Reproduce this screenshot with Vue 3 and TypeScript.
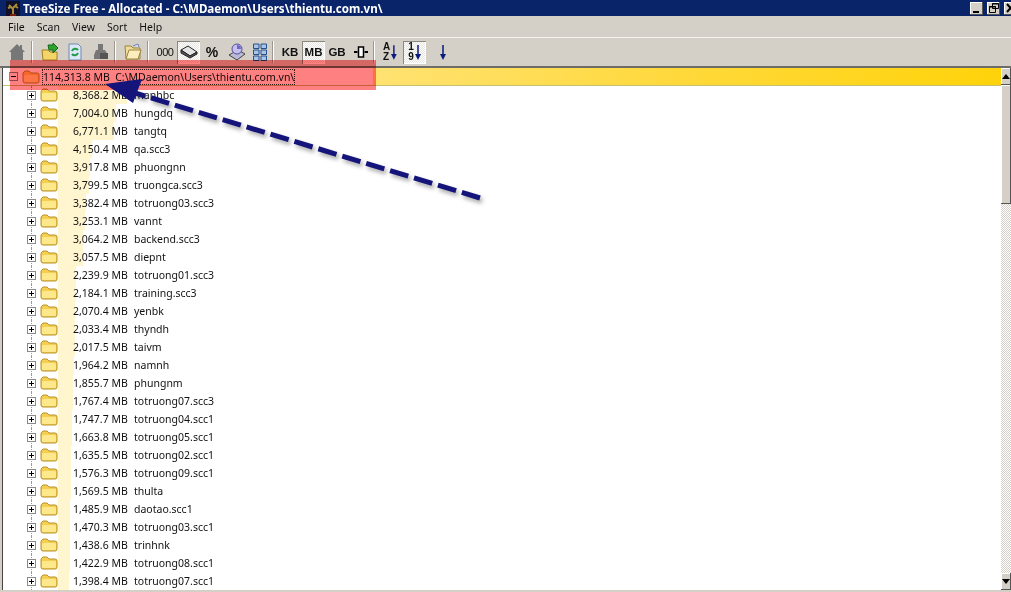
<script setup lang="ts">
interface Row { size: string; name: string; mb: number }
const raw: [string, string][] = [
  ['8,368.2', 'manhbc'], ['7,004.0', 'hungdq'], ['6,771.1', 'tangtq'], ['4,150.4', 'qa.scc3'],
  ['3,917.8', 'phuongnn'], ['3,799.5', 'truongca.scc3'], ['3,382.4', 'totruong03.scc3'], ['3,253.1', 'vannt'],
  ['3,064.2', 'backend.scc3'], ['3,057.5', 'diepnt'], ['2,239.9', 'totruong01.scc3'], ['2,184.1', 'training.scc3'],
  ['2,070.4', 'yenbk'], ['2,033.4', 'thyndh'], ['2,017.5', 'taivm'], ['1,964.2', 'namnh'],
  ['1,855.7', 'phungnm'], ['1,767.4', 'totruong07.scc3'], ['1,747.7', 'totruong04.scc1'], ['1,663.8', 'totruong05.scc1'],
  ['1,635.5', 'totruong02.scc1'], ['1,576.3', 'totruong09.scc1'], ['1,569.5', 'thulta'], ['1,485.9', 'daotao.scc1'],
  ['1,470.3', 'totruong03.scc1'], ['1,438.6', 'trinhnk'], ['1,422.9', 'totruong08.scc1'], ['1,398.4', 'totruong07.scc1'],
]
const rows: Row[] = raw.map(([size, name]) => ({ size, name, mb: parseFloat(size.replace(',', '')) }))
const barWidth = (mb: number) => `${Math.round((mb / 114313.8) * 940)}px`
const menu = ['File', 'Scan', 'View', 'Sort', 'Help']
</script>

<template>
  <div class="win">
    <header class="title">
      <svg class="logo" width="14" height="15" viewBox="0 0 14 15">
        <rect width="14" height="15" fill="#10102a" />
        <path d="M7 14V7M7 8 3 4M7 7l4-4M5 6 2 7M9 5l3 2" stroke="#a88a3a" stroke-width="2" fill="none" />
        <path d="M4 14h6" stroke="#7a1c10" stroke-width="2" />
      </svg>
      <span class="title-text">TreeSize Free - Allocated - C:\MDaemon\Users\thientu.com.vn\</span>
      <div class="win-btns">
        <span class="wbtn"><svg width="12" height="10" viewBox="0 0 12 10"><path d="M2 9h6" stroke="#000" stroke-width="2" /></svg></span>
        <span class="wbtn"><svg width="12" height="10" viewBox="0 0 12 10"><path d="M4.500.5h6v5h-6zM1.500 3.500h6v6h-6z" fill="#d4d0c8" stroke="#000" /><path d="M4 1h7M1 4h7" stroke="#000" /></svg></span>
        <span class="wbtn"><svg width="12" height="10" viewBox="0 0 12 10"><path d="M2 1l7 8M9 1 2 9" stroke="#000" stroke-width="2" /></svg></span>
      </div>
    </header>

    <nav class="menu"><span v-for="m in menu" :key="m">{{ m }}</span></nav>

    <div class="toolbar">
      <span class="slot s18"><svg width="18" height="18" viewBox="0 0 18 18"><path d="M9 1 1 9h2v8h12V9h2z" fill="#777" /><rect x="12" y="2" width="2" height="5" fill="#777" /></svg></span>
      <i class="sep"></i>
      <span class="slot s18"><svg width="18" height="20" viewBox="0 0 18 20"><path d="M1 8h6l2 2h7v8H2z" fill="#f4d56a" stroke="#a08020" /><path d="M7 3h5V1l5 5-5 5V8H8z" fill="#2fa12f" stroke="#166b16" /></svg></span>
      <span class="slot s14 gap9"><svg width="14" height="18" viewBox="0 0 14 18"><path d="M1 1h9l3 3v13H1z" fill="#dbe8f6" stroke="#7088b0" /><path d="M10 7a3.500 3.500 0 0 0-6 1M4 11a3.500 3.500 0 0 0 6-1" stroke="#1f9a4a" stroke-width="2" fill="none" /></svg></span>
      <span class="slot s16 gap11"><svg width="16" height="18" viewBox="0 0 16 18"><path d="M5 1h5v6H5zM3 7h9l3 5v4H1v-4z" fill="#777" /><rect x="7" y="10" width="8" height="6" fill="#555" /></svg></span>
      <i class="sep"></i>
      <span class="slot s18"><svg width="18" height="18" viewBox="0 0 18 18"><path d="M1 3h6l2 2h7v11H2z" fill="#f0dc9a" stroke="#9a8240" /><path d="M5 7h12l-3 9H2z" fill="#fbeebc" stroke="#9a8240" /><path d="M9 3l5-2 1 3" fill="#cfe0f5" stroke="#7088b0" /></svg></span>
      <i class="sep"></i>
      <span class="slot s16 txt zeros">000</span>
      <span class="slot pressed gap4"><svg width="20" height="14" viewBox="0 0 20 14"><path d="M2 5 9 1l9 6-7 4z" fill="#e4e4e4" stroke="#222" /><path d="M2 5v3l9 5 7-4V7l-7 4z" fill="#555" stroke="#222" /></svg></span>
      <span class="slot s14 gap5 txt pct">%</span>
      <span class="slot s18 gap9"><svg width="18" height="18" viewBox="0 0 18 18"><path d="M1 12 10 7l7 4-8 6z" fill="#b9b9d8" stroke="#444" /><circle cx="9" cy="6" r="5" fill="#c5c0ee" stroke="#55509a" /><path d="M9 6V2a4 4 0 0 1 4 4z" fill="#7068c8" /></svg></span>
      <span class="slot s14 gap7"><svg width="14" height="18" viewBox="0 0 14 18"><path d="M.5 1h5.500v4.500H.5zM8 1h5.500v4.500H8zM.5 7h5.500v4.500H.5zM8 7h5.500v4.500H8zM.5 13h5.500v4.500H.5zM8 13h5.500v4.500H8z" fill="#a9c4e8" stroke="#24508c" /></svg></span>
      <i class="sep"></i>
      <span class="slot s16 txt unit">KB</span>
      <span class="slot pressed gap4 txt unit">MB</span>
      <span class="slot s16 gap4 txt unit">GB</span>
      <span class="slot s14 gap9"><svg width="14" height="12" viewBox="0 0 14 12"><path d="M0 6h3.500M10.500 6H14" stroke="#000" stroke-width="2" /><path d="M4.500 1h5v10h-5z" fill="#fff" stroke="#000" stroke-width="1.500" /></svg></span>
      <i class="sep"></i>
      <span class="slot sort s14"><span class="az"><b>A</b><b>Z</b></span><svg width="6" height="15" viewBox="0 0 6 15"><path d="M3 0v11" stroke="#0a1a80" stroke-width="1.500" /><path d="M0 9h6l-3 6z" fill="#0a1a80" /></svg></span>
      <span class="slot sort pressed gap6"><span class="az"><b>1</b><b>9</b></span><svg width="6" height="15" viewBox="0 0 6 15"><path d="M3 0v11" stroke="#0a1a80" stroke-width="1.500" /><path d="M0 9h6l-3 6z" fill="#0a1a80" /></svg></span>
      <span class="slot down"><svg width="6" height="15" viewBox="0 0 6 15"><path d="M3 0v11" stroke="#0a1a80" stroke-width="1.500" /><path d="M0 9h6l-3 6z" fill="#0a1a80" /></svg></span>
    </div>

    <main class="body">
      <div class="tree">
        <div class="root">
          <span class="box"><i></i></span>
          <svg class="folder" width="18" height="14" viewBox="0 0 18 14"><path d="M1 3 3 1h4l2 2h6q2 0 2 2v6q0 2-2 2H3q-2 0-2-2z" fill="#f4cf52" stroke="#b8922a" /><path d="M2 6q0-1 2-1h10q2 0 2 1v5q0 1-1 1H3q-1 0-1-1z" fill="#fde88c" /></svg>
          <span class="root-label">114,313.8 MB&nbsp; C:\MDaemon\Users\thientu.com.vn\</span>
        </div>
        <div v-for="r in rows" :key="r.name + r.size" class="row">
          <span class="guide"></span>
          <span class="box"><i></i><u></u></span>
          <svg class="folder" width="18" height="14" viewBox="0 0 18 14"><path d="M1 3 3 1h4l2 2h6q2 0 2 2v6q0 2-2 2H3q-2 0-2-2z" fill="#f4cf52" stroke="#b8922a" /><path d="M2 6q0-1 2-1h10q2 0 2 1v5q0 1-1 1H3q-1 0-1-1z" fill="#fde88c" /></svg>
          <span class="cell">
            <span class="bar" :style="{ width: barWidth(r.mb) }"></span>
            <span class="size">{{ r.size }} MB</span>
            <span class="name">{{ r.name }}</span>
          </span>
        </div>
      </div>
      <aside class="scroll">
        <span class="sbtn"><svg width="8" height="5" viewBox="0 0 8 5"><path d="M4 0 8 5H0z" /></svg></span>
        <span class="thumb"></span>
        <span class="track"></span>
        <span class="sbtn"><svg width="8" height="5" viewBox="0 0 8 5"><path d="M0 0h8L4 5z" /></svg></span>
      </aside>
    </main>
    <div class="status"></div>

    <div class="highlight"></div>
    <svg class="arrow" width="1011" height="592" viewBox="0 0 1011 592">
      <defs><filter id="sh" x="-10%" y="-30%" width="120%" height="160%"><feGaussianBlur stdDeviation="2" /></filter></defs>
      <path d="M482 201 134 95" stroke="#000" stroke-opacity=".35" stroke-width="5" stroke-dasharray="19 6" fill="none" filter="url(#sh)" />
      <path d="M480 198 132 92" stroke="#14147a" stroke-width="5" stroke-dasharray="19 6" fill="none" />
      <path d="M105 84 142 79 133 103z" fill="#14147a" />
    </svg>
  </div>
</template>

<style>
html, body { margin: 0; background: #fff; overflow: hidden; }
</style>

<style scoped>
.win {
  position: relative;
  width: 1011px;
  height: 592px;
  overflow: hidden;
  background: #d4d0c8;
  font-family: "Noto Sans", sans-serif;
  display: flex;
  flex-direction: column;
  color: #111;
}
.title {
  height: 16px;
  background: #0a246a;
  color: #fff;
  display: flex;
  align-items: center;
  flex: none;
}
.logo { margin-left: 6px; flex: none; }
.title-text { margin-left: 3px; font-size: 11.600px; font-weight: 700; white-space: nowrap; }
.win-btns { margin-left: auto; display: flex; gap: 4px; margin-right: -6px; }
.wbtn {
  width: 13px;
  height: 13px;
  background: #d4d0c8;
  display: flex;
  align-items: center;
  justify-content: center;
  box-shadow: inset -1px -1px #555, inset 1px 1px #fff;
}
.menu {
  height: 21px;
  display: flex;
  align-items: center;
  gap: 12px;
  padding-left: 8px;
  font-size: 10.500px;
  border-bottom: 1px solid #f5f5f0;
  flex: none;
}
.toolbar {
  height: 30px;
  display: flex;
  align-items: center;
  flex: none;
  padding-left: 8px;
  border-bottom: 2px solid #6e6c66;
  box-sizing: border-box;
}
.slot { flex: none; display: inline-flex; align-items: center; justify-content: center; }
.s18 { width: 18px; }
.s16 { width: 16px; }
.s14 { width: 14px; }
.gap4 { margin-left: 4px; }
.gap5 { margin-left: 5px; }
.gap6 { margin-left: 6px; }
.gap7 { margin-left: 7px; }
.gap9 { margin-left: 9px; }
.gap11 { margin-left: 11px; }
.sep { width: 1px; height: 22px; background: #9a9890; border-right: 1px solid #fff; margin: 0 8px 0 5px; flex: none; }
.txt { font-weight: 700; font-family: "Liberation Sans", sans-serif; }
.zeros { font-size: 11px; font-weight: 400; letter-spacing: -.5px; }
.pct { font-size: 14px; }
.unit { font-size: 11.500px; }
.pressed {
  height: 23px;
  width: 23px;
  box-sizing: border-box;
  background: conic-gradient(#e6e4de 25%, #fff 0 50%, #e6e4de 0 75%, #fff 0) 0 0 / 2px 2px;
  box-shadow: inset 1px 1px #8a8880, inset -1px -1px #fff;
}
.sort { gap: 1px; }
.az { display: flex; flex-direction: column; font-family: "Liberation Sans", sans-serif; font-size: 10px; line-height: 10px; }
.az b { font-weight: 700; }
.down { margin-left: 14px; }
.body { flex: 1; display: flex; min-height: 0; background: #fff; margin-left: 3px; box-shadow: -1px 0 #444; }
.tree { flex: 1; min-width: 0; overflow: hidden; font-size: 10.500px; }
.root {
  height: 18px;
  display: flex;
  align-items: center;
  padding-left: 6px;
  box-sizing: border-box;
  border-bottom: 1px solid #c4c070;
  background: linear-gradient(90deg, #fff 370px, #ffe272 370px, #ffd93c 670px, #ffd30a 100%);
}
.box {
  width: 9px;
  height: 9px;
  box-sizing: border-box;
  border: 1px solid #8a8a8a;
  background: #fff;
  position: relative;
  flex: none;
}
.box i { position: absolute; left: 1px; right: 1px; top: 3px; height: 1px; background: #000; }
.box u { position: absolute; top: 1px; bottom: 1px; left: 3px; width: 1px; background: #000; }
.root .folder { margin-left: 4px; flex: none; }
.root-label { margin-left: 3px; outline: 1px dotted #333; white-space: nowrap; }
.row { height: 18px; display: flex; align-items: center; padding-left: 24px; position: relative; }
.guide { position: absolute; left: 28px; top: 0; bottom: 0; border-left: 1px dotted #999; }
.row .folder { margin-left: 4px; flex: none; }
.cell { position: relative; display: flex; align-items: center; height: 18px; width: 800px; padding-left: 15px; }
.bar { position: absolute; left: 0; top: 0; bottom: 0; background: #fff5cf; }
.size { position: relative; width: 61px; white-space: nowrap; flex: none; }
.name { position: relative; white-space: nowrap; }
.scroll { width: 10px; flex: none; display: flex; flex-direction: column; }
.sbtn {
  height: 17px;
  flex: none;
  display: flex;
  align-items: center;
  justify-content: center;
  background: #d4d0c8;
  box-shadow: inset -1px -1px #555, inset 1px 1px #fff;
}
.thumb { height: 119px; flex: none; background: #d4d0c8; box-shadow: inset -1px -1px #555, inset 1px 1px #fff; }
.track { flex: 1; background: conic-gradient(#d4d0c8 25%, #fff 0 50%, #d4d0c8 0 75%, #fff 0) 0 0 / 2px 2px; }
.status { height: 2px; flex: none; background: #d4d0c8; }
.highlight { position: absolute; left: 10px; top: 60px; width: 366px; height: 30px; background: #ff8080; mix-blend-mode: multiply; }
.arrow { position: absolute; left: 0; top: 0; pointer-events: none; }
</style>
